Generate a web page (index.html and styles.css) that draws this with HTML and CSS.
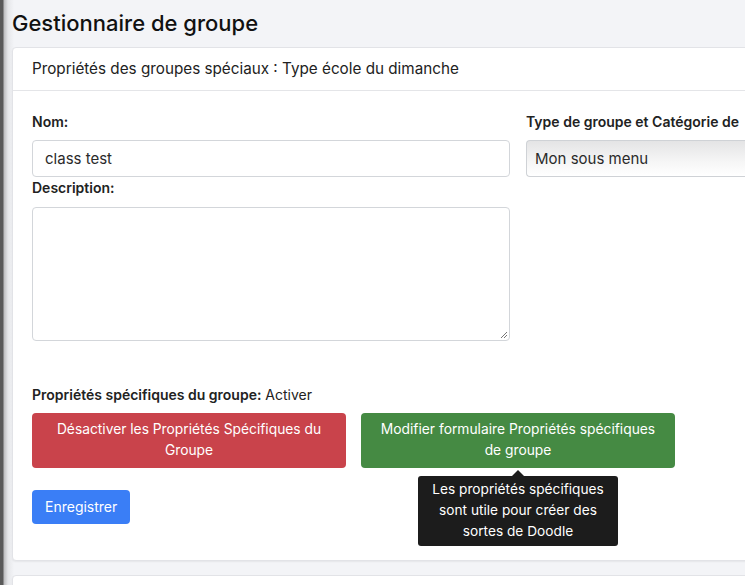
FILE: index.html
```html
<!DOCTYPE html>
<html lang="fr">
<head>
<meta charset="utf-8">
<title>Gestionnaire de groupe</title>
<link rel="stylesheet" href="styles.css">
</head>
<body>
<div class="page">
  <h1 class="title">Gestionnaire de groupe</h1>
  <div class="card">
    <div class="card-header">Propriétés des groupes spéciaux : Type école du dimanche</div>
    <div class="card-body">
      <div class="row">
        <div class="col-left">
          <label class="label">Nom:</label>
          <div class="input">class test</div>
          <label class="label label-desc">Description:</label>
          <div class="textarea">
            <svg class="grip" width="8" height="8" viewBox="0 0 8 8"><path d="M7 1 L1 7 M7 4 L4 7" stroke="#777" stroke-width="1" fill="none"/></svg>
          </div>
        </div>
        <div class="col-right">
          <label class="label">Type de groupe et Catégorie de</label>
          <div class="select">Mon sous menu</div>
        </div>
      </div>
      <div class="props"><b>Propriétés spécifiques du groupe:</b> Activer</div>
      <div class="btn-row">
        <div class="btn btn-red">Désactiver les Propriétés Spécifiques du Groupe</div>
        <div class="btn btn-green">Modifier formulaire Propriétés spécifiques de groupe
          <div class="tooltip">Les propriétés spécifiques sont utile pour créer des sortes de Doodle</div>
        </div>
      </div>
      <div class="btn btn-blue">Enregistrer</div>
    </div>
  </div>
  <div class="card card-next"></div>
</div>
</body>
</html>
```
FILE: styles.css
```css
html, body {
  margin: 0;
  padding: 0;
  height: 100%;
  overflow: hidden;
}
body {
  font-family: Inter, "Liberation Sans", Arial, sans-serif;
  color: #212529;
  background: linear-gradient(to right, #5a5a5a 0, #5a5a5a 3px, #bdbdbf 4px, #e6e7ea 8px, #f3f4f7 14px, #f3f4f7 100%);
}
.page {
  padding-left: 12px;
  width: 760px;
}
.title {
  font-size: 22px;
  font-weight: 500;
  margin: 0;
  padding-top: 9px;
  height: 38px;
  line-height: 28px;
  color: #111;
}
.card {
  background: #fff;
  border: 1px solid #e2e3e7;
  border-radius: 4px;
  box-shadow: 0 1px 2px rgba(0,0,0,0.06);
}
.card-header {
  height: 42px;
  line-height: 42px;
  padding-left: 19px;
  font-size: 15.25px;
  border-bottom: 1px solid #e4e5e8;
  color: #222;
}
.card-body {
  padding: 22px 19px 36px 19px;
}
.row {
  display: flex;
  gap: 16px;
}
.col-left {
  width: 478px;
  display: flex;
  flex-direction: column;
}
.col-right {
  flex: 1;
  display: flex;
  flex-direction: column;
}
.label {
  font-size: 14px;
  font-weight: 600;
  line-height: 18px;
  height: 18px;
  margin-bottom: 9px;
  color: #222;
  white-space: nowrap;
}
.label-desc {
  margin-top: 2px;
  margin-bottom: 10px;
}
.input, .select {
  height: 37px;
  box-sizing: border-box;
  border: 1px solid #d3d6da;
  border-radius: 4px;
  line-height: 35px;
  font-size: 15px;
  color: #2a2a2a;
}
.input {
  padding-left: 12px;
}
.select {
  padding-left: 8px;
  background: linear-gradient(to bottom, #e4e4e5 0%, #f6f6f6 60%, #ffffff 100%);
  border-color: #cfd2d6;
  border-right: none;
  border-top-right-radius: 0;
  border-bottom-right-radius: 0;
}
.textarea {
  height: 134px;
  box-sizing: border-box;
  border: 1px solid #d3d6da;
  border-radius: 4px;
  position: relative;
}
.grip {
  position: absolute;
  right: 1px;
  bottom: 1px;
}
.props {
  margin-top: 45px;
  font-size: 14px;
  line-height: 18px;
  color: #222;
}
.props b {
  font-weight: 600;
}
.btn-row {
  display: flex;
  gap: 15px;
  margin-top: 9px;
}
.btn {
  box-sizing: border-box;
  border-radius: 4px;
  color: #fff;
  font-size: 13.8px;
  line-height: 21px;
  text-align: center;
}
.btn-red, .btn-green {
  width: 314px;
  height: 55px;
  padding: 6px 14px;
}
.btn-red {
  background: #c9434b;
}
.btn-green {
  background: #458a43;
  position: relative;
}
.btn-blue {
  display: inline-block;
  margin-top: 22px;
  background: #3a7ef6;
  height: 34px;
  line-height: 34px;
  padding: 0 13px;
  font-size: 14px;
}
.tooltip {
  position: absolute;
  top: 63px;
  left: 57px;
  width: 200px;
  box-sizing: border-box;
  background: #1c1c1c;
  border-radius: 3px;
  padding: 3px 6px 4px;
  font-size: 13.7px;
  line-height: 21px;
  color: #fff;
  text-align: center;
}
.tooltip::before {
  content: "";
  position: absolute;
  top: -6px;
  left: 94px;
  border-left: 6px solid transparent;
  border-right: 6px solid transparent;
  border-bottom: 6px solid #1c1c1c;
}
.card-next {
  margin-top: 14px;
  height: 40px;
}
```
